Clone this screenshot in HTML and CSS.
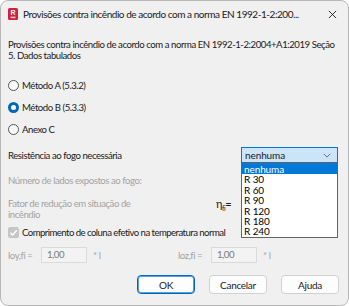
FILE: index.html
```html
<!DOCTYPE html>
<html>
  <head>
    <title>Provisões contra incêndio</title>
    <link rel="stylesheet" href="styles.css">
  </head>
  <body>
    <div class="window">
      <div class="titlebar">
        <svg class="app-icon" viewBox="0 0 10 12" xmlns="http://www.w3.org/2000/svg">
          <rect x="0" y="0" width="10" height="12" rx="1.5" fill="#d11f3c" />
          <text x="5" y="6.6" text-anchor="middle" class="app-letter">R</text>
          <rect x="2.5" y="8.6" width="5" height="1.6" fill="#f3c6cd" />
        </svg>
        <span class="title">Provisões contra incêndio de acordo com a norma EN 1992-1-2:200...</span>
        <svg class="close-icon" viewBox="0 0 10 10" xmlns="http://www.w3.org/2000/svg">
          <path d="M1 1L9 9M9 1L1 9" />
        </svg>
      </div>

      <div class="content">
        <p class="intro">
          Provisões contra incêndio de acordo com a norma EN 1992-1-2:2004+A1:2019 Seção<br>
          5. Dados tabulados
        </p>

        <div class="radio-row first">
          <span class="radio"></span>
          <span>Método A (5.3.2)</span>
        </div>
        <div class="radio-row">
          <span class="radio checked"></span>
          <span>Método B (5.3.3)</span>
        </div>
        <div class="radio-row">
          <span class="radio"></span>
          <span>Anexo C</span>
        </div>

        <div class="fire-row">
          <span class="fire-label">Resistência ao fogo necessária</span>
          <div class="select-wrap">
            <div class="select">
              <span>nenhuma</span>
              <svg class="chevron" viewBox="0 0 10 6" xmlns="http://www.w3.org/2000/svg">
                <path d="M1 1l4 4 4-4" />
              </svg>
            </div>
            <ul class="select-list">
              <li class="selected">nenhuma</li>
              <li>R 30</li>
              <li>R 60</li>
              <li>R 90</li>
              <li>R 120</li>
              <li>R 180</li>
              <li>R 240</li>
            </ul>
          </div>
        </div>

        <div class="disabled-row sides">Número de lados expostos ao fogo:</div>

        <div class="factor-row">
          <span class="disabled-text factor-label">Fator de redução em situação de<br>incêndio</span>
          <span class="eta">η<sub>fi</sub>=</span>
        </div>

        <div class="check-row">
          <span class="checkbox">
            <svg viewBox="0 0 10 10" xmlns="http://www.w3.org/2000/svg">
              <path d="M2.2 5.2l2 2 3.8-4.2" />
            </svg>
          </span>
          <span class="check-label">Comprimento de coluna efetivo na temperatura normal</span>
        </div>

        <div class="length-row">
          <div class="length-group">
            <span class="length-label">loy,fi =</span>
            <span class="field">1,00</span>
            <span class="unit">* l</span>
          </div>
          <div class="length-group">
            <span class="length-label">loz,fi =</span>
            <span class="field">1,00</span>
            <span class="unit">* l</span>
          </div>
        </div>
      </div>

      <div class="buttons">
        <button class="btn default">OK</button>
        <button class="btn">Cancelar</button>
        <button class="btn">Ajuda</button>
      </div>
    </div>
  </body>
</html>
```

FILE: styles.css
```css
body {
  margin: 0;
  background-color: #ffffff;
  font-family: Lato, "Noto Sans", Arial, sans-serif;
  font-size: 9.6px;
  letter-spacing: -0.45px;
  color: #1a1a1a;
}
.window {
  width: 349px;
  height: 306px;
  box-sizing: border-box;
  border: 1px solid #b8b8b8;
  border-radius: 8px;
  background-color: #f0f0f0;
  overflow: hidden;
  position: relative;
}
.titlebar {
  height: 26px;
  display: flex;
  align-items: center;
  padding: 0 0 0 7px;
}
.app-icon {
  width: 10px;
  height: 12px;
  flex-shrink: 0;
}
.app-letter {
  font-family: "Liberation Sans", Arial, sans-serif;
  font-size: 7px;
  font-weight: bold;
  letter-spacing: 0;
  fill: #ffffff;
}
.title {
  margin-left: 5px;
  font-size: 10px;
  letter-spacing: -0.45px;
  color: #1a1a1a;
  white-space: nowrap;
  overflow: hidden;
  flex: 1;
}
.close-icon {
  width: 9px;
  height: 9px;
  margin: 0 11px 0 8px;
  stroke: #1a1a1a;
  stroke-width: 1;
  fill: none;
  flex-shrink: 0;
}
.content {
  padding: 0 0 0 7px;
}
.intro {
  margin: 12px 0 0;
  line-height: 11px;
  white-space: nowrap;
}
.radio-row {
  height: 22px;
  display: flex;
  align-items: center;
  gap: 3px;
}
.radio-row.first {
  margin-top: 13px;
}
.radio {
  width: 9px;
  height: 9px;
  border: 1px solid #555555;
  border-radius: 50%;
  background-color: #f8f8f8;
}
.radio.checked {
  width: 5px;
  height: 5px;
  border: 3px solid #0067c0;
  background-color: #ffffff;
}
.fire-row {
  margin-top: 6px;
  height: 18px;
  display: flex;
  align-items: center;
}
.fire-label {
  width: 233px;
}
.select-wrap {
  position: relative;
  width: 97px;
  letter-spacing: -0.1px;
  font-size: 10px;
}
.select {
  height: 16px;
  box-sizing: border-box;
  border: 1px solid #0078d7;
  background-color: #cce4f7;
  display: flex;
  align-items: center;
  justify-content: space-between;
  padding: 0 6px 0 3px;
}
.chevron {
  width: 8px;
  height: 5px;
  stroke: #555555;
  stroke-width: 1;
  fill: none;
}
.select-list {
  position: absolute;
  left: 0;
  top: 16px;
  width: 97px;
  box-sizing: border-box;
  margin: 0;
  padding: 0;
  list-style: none;
  background-color: #ffffff;
  border: 1px solid #646464;
  z-index: 2;
}
.select-list li {
  height: 10.4px;
  line-height: 10.4px;
  padding-left: 2px;
  color: #000000;
}
.select-list li.selected {
  background-color: #0078d7;
  color: #ffffff;
}
.disabled-row,
.disabled-text {
  color: #a3a3a3;
}
.sides {
  margin-top: 11px;
  height: 12px;
  line-height: 12px;
}
.factor-row {
  margin-top: 11px;
  display: flex;
  align-items: flex-start;
}
.factor-label {
  width: 208px;
  line-height: 11px;
}
.eta {
  color: #1a1a1a;
  font-size: 11px;
  line-height: 11px;
}
.eta sub {
  font-size: 7px;
}
.check-row {
  margin-top: 6px;
  height: 12px;
  display: flex;
  align-items: center;
  gap: 3px;
}
.check-label {
  letter-spacing: -0.55px;
}
.checkbox {
  width: 11px;
  height: 11px;
  border-radius: 2px;
  background-color: #c6c6c6;
  display: flex;
}
.checkbox svg {
  width: 11px;
  height: 11px;
  stroke: #ffffff;
  stroke-width: 1.3;
  fill: none;
}
.length-row {
  margin-top: 9px;
  height: 16px;
  display: flex;
}
.length-group {
  width: 200px;
  display: flex;
  align-items: center;
  color: #a3a3a3;
  white-space: nowrap;
}
.length-label {
  width: 33px;
}
.field {
  width: 46px;
  height: 16px;
  box-sizing: border-box;
  border: 1px solid #dadada;
  background-color: #f3f3f3;
  color: #7a7a7a;
  padding-left: 5px;
  line-height: 14px;
}
.unit {
  margin-left: 6px;
}
.buttons {
  margin-top: 12px;
  display: flex;
  justify-content: flex-end;
  gap: 14px;
  padding-right: 9px;
}
.btn {
  width: 58px;
  height: 19px;
  box-sizing: border-box;
  border: 1px solid #d0d0d0;
  border-radius: 4px;
  background-color: #fdfdfd;
  font-family: Lato, "Noto Sans", Arial, sans-serif;
  font-size: 10px;
  letter-spacing: -0.3px;
  color: #1a1a1a;
  padding: 0;
}
.btn.default {
  border: 1px solid #0067c0;
  box-shadow: inset 0 0 0 1px #5aa0dc;
}
```
